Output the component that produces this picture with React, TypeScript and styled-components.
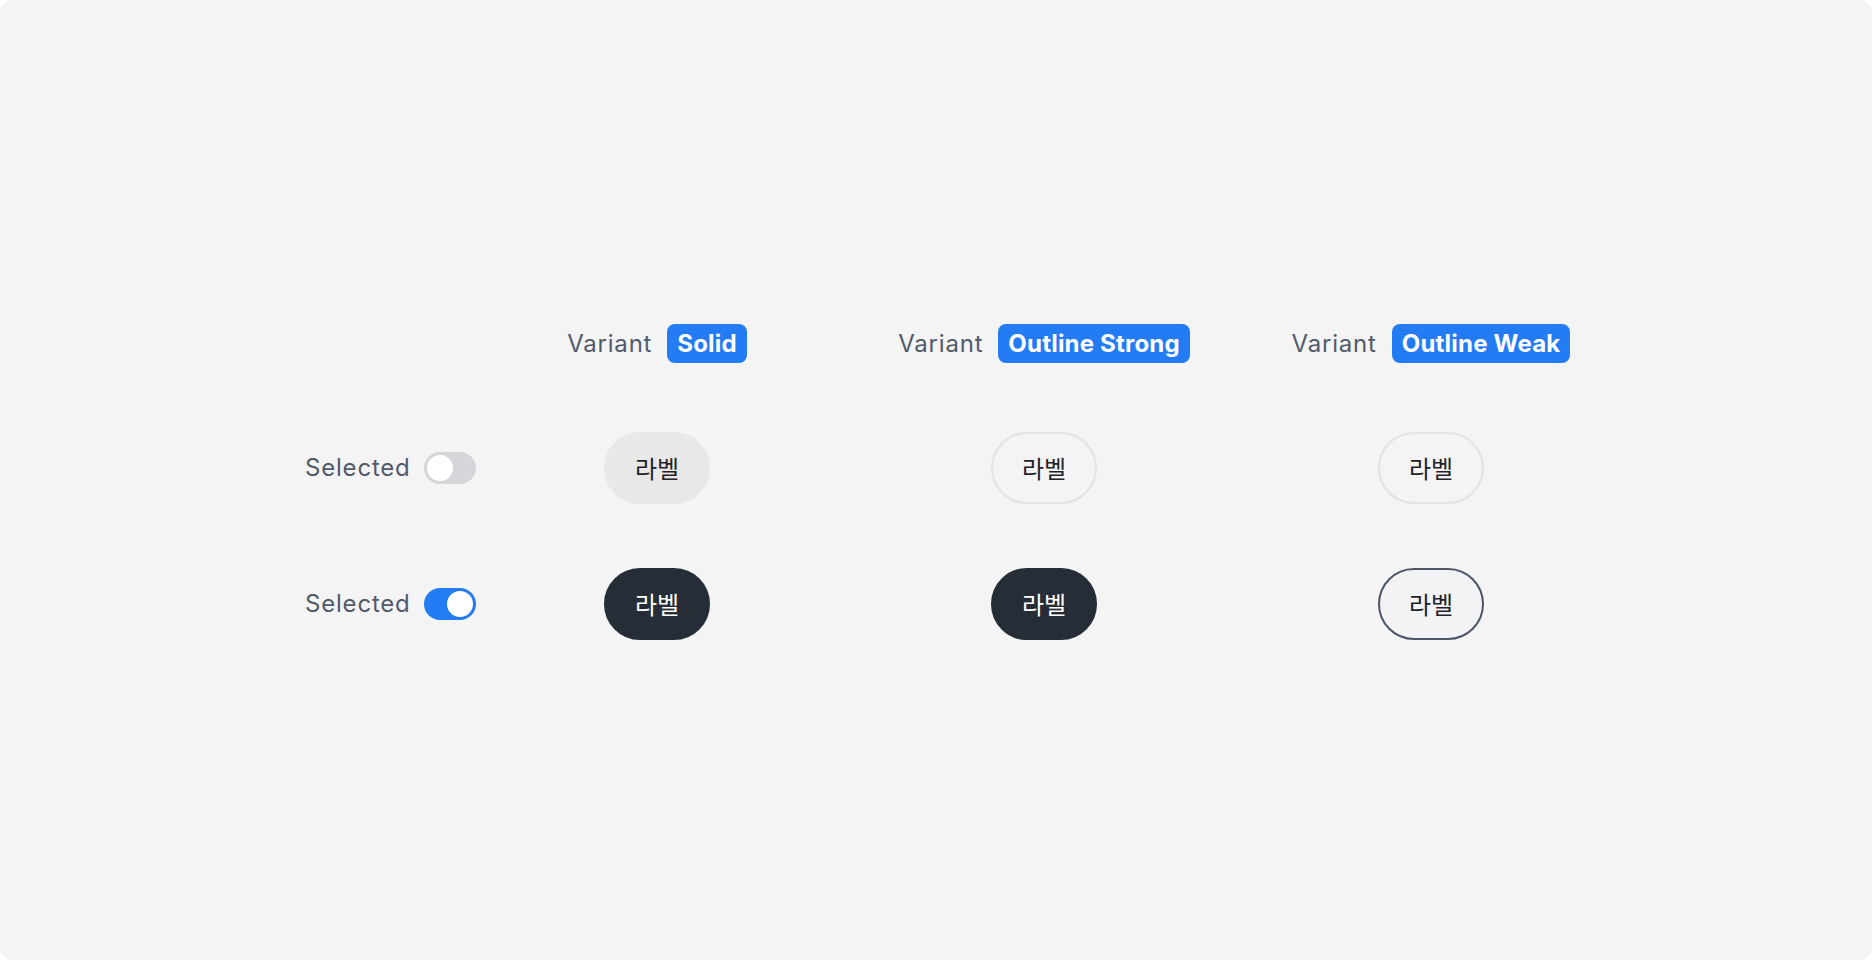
import styled, { createGlobalStyle } from 'styled-components'

const GlobalStyle = createGlobalStyle`
  html, body {
    margin: 0;
    padding: 0;
    background: #ffffff;
  }
  body {
    font-family: Inter, "Noto Sans", "Noto Sans CJK KR", sans-serif;
  }
`

type Variant = 'solid' | 'outlineStrong' | 'outlineWeak'

const columns: { variant: Variant; title: string }[] = [
  { variant: 'solid', title: 'Solid' },
  { variant: 'outlineStrong', title: 'Outline Strong' },
  { variant: 'outlineWeak', title: 'Outline Weak' },
]

const Toggle: React.FC<{ on: boolean }> = ({ on }) => (
  <Track $on={on}>
    <Knob />
  </Track>
)

export default function App() {
  return (
    <>
      <GlobalStyle />
      <Canvas>
        <Table>
          <Row $height={40}>
            <RowLabel />
            <Cells>
              {columns.map((c) => (
                <Cell key={c.variant}>
                  <HeaderLabel>Variant</HeaderLabel>
                  <Chip>{c.title}</Chip>
                </Cell>
              ))}
            </Cells>
          </Row>
          {[false, true].map((selected) => (
            <Row $height={72} key={String(selected)}>
              <RowLabel>
                <LabelText>Selected</LabelText>
                <Toggle on={selected} />
              </RowLabel>
              <Cells>
                {columns.map((c) => (
                  <Cell key={c.variant}>
                    <ChipButton $variant={c.variant} $selected={selected}>
                      라벨
                    </ChipButton>
                  </Cell>
                ))}
              </Cells>
            </Row>
          ))}
        </Table>
      </Canvas>
    </>
  )
}

const Canvas = styled.div`
  width: 1872px;
  height: 960px;
  box-sizing: border-box;
  background: #f4f4f4;
  border-radius: 12px;
  display: flex;
  align-items: center;
  padding: 3px 0 0 305px;
`

const Table = styled.div`
  display: flex;
  flex-direction: column;
  gap: 64px;
  &> :first-child {
    margin-bottom: 4px;
  }
`

const Row = styled.div<{ $height: number }>`
  display: flex;
  align-items: center;
  height: ${(p) => p.$height}px;
`

const RowLabel = styled.div`
  width: 171px;
  display: flex;
  align-items: center;
  justify-content: space-between;
  gap: 12px;
`

const LabelText = styled.span`
  font-size: 24px;
  color: #515a6b;
  letter-spacing: 0.8px;
`

const Track = styled.div<{ $on: boolean }>`
  width: 52px;
  height: 32px;
  box-sizing: border-box;
  border-radius: 16px;
  padding: 3px;
  display: flex;
  justify-content: ${(p) => (p.$on ? 'flex-end' : 'flex-start')};
  background: ${(p) => (p.$on ? '#247cf5' : '#d5d6da')};
`

const Knob = styled.div`
  width: 26px;
  height: 26px;
  border-radius: 50%;
  background: #ffffff;
`

const Cells = styled.div`
  display: grid;
  grid-template-columns: repeat(3, 362px);
  column-gap: 25px;
`

const Cell = styled.div`
  display: flex;
  align-items: center;
  justify-content: center;
  gap: 15px;
`

const HeaderLabel = styled.span`
  font-size: 24px;
  color: #515a6b;
  letter-spacing: 0.8px;
`

const Chip = styled.span`
  display: inline-flex;
  align-items: center;
  height: 39px;
  padding: 0 10px;
  border-radius: 8px;
  background: #247cf5;
  color: #ffffff;
  font-size: 24px;
  font-weight: 700;
  letter-spacing: 0.2px;
  white-space: nowrap;
`

const ChipButton = styled.button<{ $variant: Variant; $selected: boolean }>`
  height: 72px;
  padding: 0 29px;
  border-radius: 36px;
  box-sizing: border-box;
  font-family: "Noto Sans CJK KR", Inter, sans-serif;
  font-size: 24px;
  font-weight: 400;
  cursor: pointer;
  border: 2px solid transparent;
  background: transparent;
  color: #1f2329;

  ${(p) =>
    p.$variant === 'solid' &&
    `
    background: ${p.$selected ? '#272d36' : '#e8e8e8'};
    border-color: ${p.$selected ? '#272d36' : '#e8e8e8'};
    color: ${p.$selected ? '#ffffff' : '#1f2329'};
  `}

  ${(p) =>
    p.$variant === 'outlineStrong' &&
    `
    background: ${p.$selected ? '#272d36' : 'transparent'};
    border-color: ${p.$selected ? '#272d36' : '#e2e2e2'};
    color: ${p.$selected ? '#ffffff' : '#1f2329'};
  `}

  ${(p) =>
    p.$variant === 'outlineWeak' &&
    `
    background: ${p.$selected ? '#f2f3f5' : 'transparent'};
    border-color: ${p.$selected ? '#4c5467' : '#e2e2e2'};
    color: #1f2329;
  `}
`
